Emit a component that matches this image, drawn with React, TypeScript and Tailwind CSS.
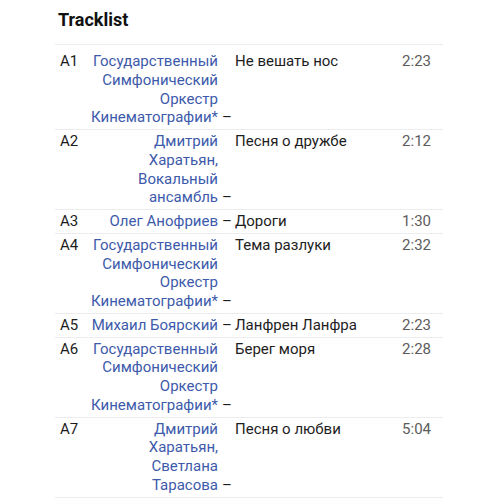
import React from "react";

type Track = {
  pos: string;
  artist: string;
  title: string;
  duration: string;
};

const ORCHESTRA = "Государственный Симфонический Оркестр Кинематографии*";

const TRACKS: Track[] = [
  { pos: "A1", artist: ORCHESTRA, title: "Не вешать нос", duration: "2:23" },
  { pos: "A2", artist: "Дмитрий Харатьян, Вокальный ансамбль", title: "Песня о дружбе", duration: "2:12" },
  { pos: "A3", artist: "Олег Анофриев", title: "Дороги", duration: "1:30" },
  { pos: "A4", artist: ORCHESTRA, title: "Тема разлуки", duration: "2:32" },
  { pos: "A5", artist: "Михаил Боярский", title: "Ланфрен Ланфра", duration: "2:23" },
  { pos: "A6", artist: ORCHESTRA, title: "Берег моря", duration: "2:28" },
  { pos: "A7", artist: "Дмитрий Харатьян, Светлана Тарасова", title: "Песня о любви", duration: "5:04" },
];

function Row({ t, first }: { t: Track; first: boolean }) {
  return (
    <div
      className={
        "grid grid-cols-[35px_128px_17px_1fr_auto] border-t border-[#ececec] pb-[2px] " +
        (first ? "pt-[7px]" : "pt-[2px]")
      }
    >
      <div className="pl-[5px] text-[#1d1d1d]">{t.pos}</div>
      <div className="text-right text-[#3d5aab]">{t.artist}</div>
      <div className="flex items-end pl-[4px] text-[#1d1d1d]">–</div>
      <div className="text-[#1d1d1d]">{t.title}</div>
      <div className="pr-[12px] text-[#5c5c5c]">{t.duration}</div>
    </div>
  );
}

export default function App() {
  return (
    <div className="h-[500px] w-[500px] overflow-hidden bg-white font-['Roboto',sans-serif]">
      <div className="ml-[55px] w-[388px] pt-[6px]">
        <h2 className="pl-[3px] text-[18px] font-bold leading-[28px] text-[#111]">Tracklist</h2>
        <div className="mt-[10px] text-[15px] leading-[18.75px]">
          {TRACKS.map((t, i) => (
            <Row key={t.pos} t={t} first={i === 0} />
          ))}
          <div className="border-t border-[#ececec]" />
        </div>
      </div>
    </div>
  );
}
